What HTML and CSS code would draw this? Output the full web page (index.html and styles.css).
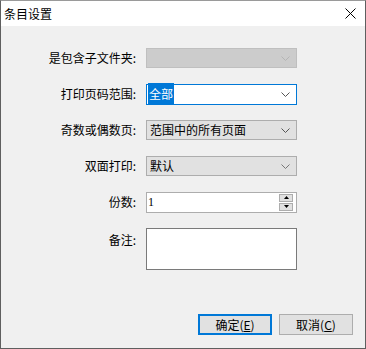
FILE: index.html
```html
<!DOCTYPE html>
<html lang="zh-CN">
<head>
<meta charset="UTF-8" />
<title>条目设置</title>
<link rel="stylesheet" href="styles.css">
</head>
<body>

<div class="dialog">
<div class="titlebar">
<span class="title">条目设置</span>
<button class="close-btn" aria-label="关闭">
<svg width="11" height="11" viewBox="0 0 11 11"><path d="M0.5 0.5 L10.5 10.5 M10.5 0.5 L0.5 10.5" stroke="#000" stroke-width="1" fill="none"/></svg>
</button>
</div>

<div class="dialog-body">
<div class="form">
<div class="row">
<label class="label">是包含子文件夹:</label>
<div class="combo disabled">
<span class="combo-text"></span>
<svg class="chevron" width="9" height="5" viewBox="0 0 9 5"><path d="M0.5 0.5 L4.5 4.5 L8.5 0.5" stroke="#b4b4b4" fill="none"/></svg>
</div>
</div>

<div class="row">
<label class="label">打印页码范围:</label>
<div class="combo editable">
<span class="combo-text"><span class="selected-text">全部</span></span>
<svg class="chevron" width="9" height="5" viewBox="0 0 9 5"><path d="M0.5 0.5 L4.5 4.5 L8.5 0.5" stroke="#555" fill="none"/></svg>
</div>
</div>

<div class="row">
<label class="label">奇数或偶数页:</label>
<div class="combo">
<span class="combo-text">范围中的所有页面</span>
<svg class="chevron" width="9" height="5" viewBox="0 0 9 5"><path d="M0.5 0.5 L4.5 4.5 L8.5 0.5" stroke="#555" fill="none"/></svg>
</div>
</div>

<div class="row">
<label class="label">双面打印:</label>
<div class="combo">
<span class="combo-text">默认</span>
<svg class="chevron" width="9" height="5" viewBox="0 0 9 5"><path d="M0.5 0.5 L4.5 4.5 L8.5 0.5" stroke="#777" fill="none"/></svg>
</div>
</div>

<div class="row">
<label class="label">份数:</label>
<div class="spin">
<span class="spin-text">1</span>
<div class="spin-btns">
<div class="spin-btn"><svg width="5" height="3" viewBox="0 0 5 3"><path d="M0 3 L2.5 0 L5 3 Z" fill="#000"/></svg></div>
<div class="spin-btn"><svg width="5" height="3" viewBox="0 0 5 3"><path d="M0 0 L2.5 3 L5 0 Z" fill="#000"/></svg></div>
</div>
</div>
</div>

<div class="row row-tall">
<label class="label">备注:</label>
<div class="memo"></div>
</div>
</div>

<div class="actions">
<button class="btn btn-default">确定(<u>E</u>)</button>
<button class="btn">取消(<u>C</u>)</button>
</div>
</div>
</div>

</body>
</html>
```

FILE: styles.css
```css
* {
box-sizing: border-box;
}

body {
margin: 0;
background: #f0f0f0;
font-family: "Noto Sans CJK SC", "Noto Sans", sans-serif;
font-size: 12px;
color: #000;
}

.dialog {
width: 366px;
height: 349px;
border: 1px solid #5f5f5f;
border-top-color: #9a9a9a;
background: #f0f0f0;
display: flex;
flex-direction: column;
}

.titlebar {
height: 25px;
background: #fff;
display: flex;
align-items: center;
justify-content: space-between;
padding-left: 3px;
flex-shrink: 0;
}

.title {
font-size: 12px;
line-height: 1;
}

.close-btn {
width: 30px;
height: 25px;
border: none;
background: transparent;
display: flex;
align-items: center;
justify-content: center;
padding: 0;
}

.dialog-body {
flex: 1;
display: flex;
flex-direction: column;
justify-content: space-between;
padding: 22px 12px 13px 0;
}

.form {
display: flex;
flex-direction: column;
gap: 16px;
}

.row {
display: flex;
align-items: center;
gap: 10px;
height: 20px;
}

.row-tall {
height: 42px;
align-items: flex-start;
}

.row-tall .label {
padding-top: 6px;
}

.label {
width: 135px;
text-align: right;
line-height: 1;
white-space: nowrap;
}

.combo {
width: 151px;
height: 20px;
border: 1px solid #adadad;
background: #e1e1e1;
display: flex;
align-items: center;
justify-content: space-between;
padding: 0 6px 0 3px;
}

.combo.disabled {
background: #cccccc;
border-color: #bfbfbf;
}

.combo.editable {
background: #fff;
border-color: #0078d7;
height: 21px;
padding-left: 1px;
}

.combo-text {
line-height: 1;
}

.selected-text {
background: #0078d7;
color: #fff;
padding: 2px 1px;
}

.spin {
width: 151px;
height: 21px;
border: 1px solid #adadad;
background: #fff;
display: flex;
align-items: center;
justify-content: space-between;
padding: 1px 3px 1px 1px;
}

.spin-text {
font-family: "Liberation Serif", serif;
font-size: 12px;
}

.spin-btns {
width: 14px;
height: 17px;
display: flex;
flex-direction: column;
gap: 1px;
}

.spin-btn {
flex: 1;
background: #e1e1e1;
border: 1px solid #adadad;
display: flex;
align-items: center;
justify-content: center;
}

.memo {
width: 151px;
height: 42px;
border: 1px solid #7a7a7a;
background: #fff;
}

.actions {
display: flex;
justify-content: flex-end;
gap: 7px;
}

.btn {
width: 74px;
height: 21px;
border: 1px solid #adadad;
background: #e1e1e1;
font-family: inherit;
font-size: 12px;
color: #000;
padding: 0;
line-height: 1;
}

.btn-default {
border: 2px solid #0078d7;
}
```
